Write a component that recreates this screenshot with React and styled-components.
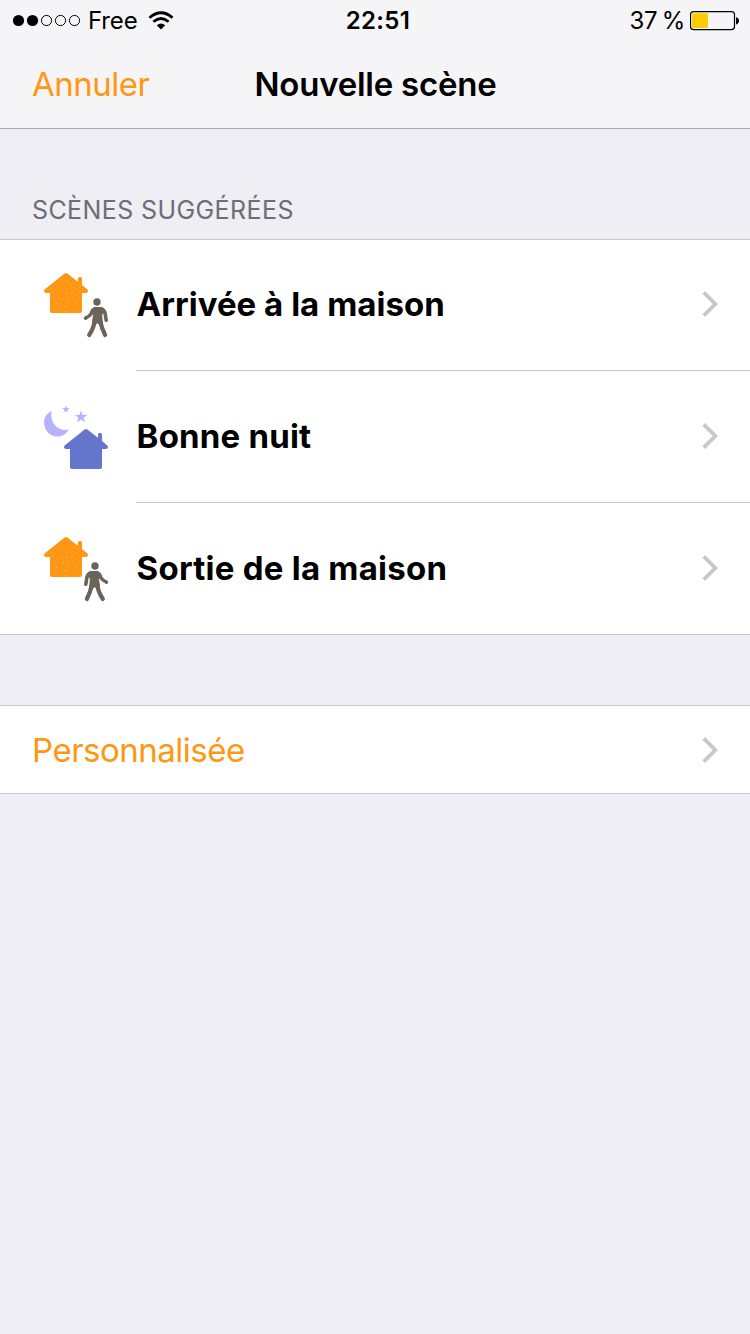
import React from "react";
import styled, { createGlobalStyle } from "styled-components";

const GlobalStyle = createGlobalStyle`
  * { box-sizing: border-box; }
  body {
    margin: 0;
    background: #efeef4;
    color: #000;
    font-family: Inter, "Liberation Sans", sans-serif;
  }
  svg { display: block; flex: none; }
`;

const Screen = styled.main`
  width: 750px;
  min-height: 1334px;
  background: #efeef4;
`;

const Header = styled.header`
  height: 129px;
  background: #f5f5f7;
  border-bottom: 1px solid #a9a9ad;
`;

const StatusBar = styled.div`
  height: 40px;
  display: grid;
  grid-template-columns: 1fr auto 1fr;
  align-items: center;
  padding: 0 11px 0 12px;
`;

const StatusGroup = styled.div`
  display: flex;
  align-items: center;
  justify-content: ${(p) => (p.$end ? "flex-end" : "flex-start")};
`;

const Label = styled.span`
  white-space: nowrap;
  font-size: ${(p) => p.$size}px;
  font-weight: ${(p) => p.$weight || 400};
  letter-spacing: ${(p) => p.$track || 0}px;
  color: ${(p) => p.$color || "#000"};
  line-height: 42px;
`;

const Carrier = styled(Label)`
  margin: 0 10px 0 7px;
`;

const Clock = styled(Label)`
  padding-left: 5px;
`;

const Percent = styled(Label)`
  margin-right: 5px;
  word-spacing: -2px;
`;

const NavBar = styled.nav`
  height: 88px;
  display: grid;
  grid-template-columns: 1fr auto 1fr;
  align-items: center;
  padding: 0 31px 0 32px;
`;

const SectionTitle = styled.h2`
  margin: 0;
  height: 110px;
  padding: 60px 32px 0;
  font-size: 25px;
  font-weight: 400;
  line-height: 42px;
  letter-spacing: 0.4px;
  color: #6d6d72;
`;

const List = styled.section`
  background: #fff;
  box-shadow: inset 0 1px #c8c7cc;
  margin-bottom: 70px;
`;

const SceneRow = styled.div`
  height: 132px;
  display: flex;
  align-items: center;
  padding-left: 30px;
  border-bottom: ${(p) => (p.$last ? "1px solid #c8c7cc" : "0")};
`;

const RowBody = styled.div`
  flex: 1;
  height: 132px;
  display: flex;
  align-items: center;
  justify-content: space-between;
  margin-left: 16px;
  padding: 0 31px 1px 0.6px;
  border-bottom: 1px solid ${(p) => (p.$line ? "#c8c7cc" : "transparent")};
`;

const CustomRow = styled.div`
  height: 89px;
  display: flex;
  align-items: center;
  justify-content: space-between;
  padding: 1px 31px 0 32px;
  border-bottom: 1px solid #c8c7cc;
`;

const Chevron = () => (
  <svg width="18" height="28" viewBox="0 0 18 28">
    <path d="M2.7 2.4 14.3 14 2.7 25.6" fill="none" stroke="#c7c7cc" strokeWidth="3.8" />
  </svg>
);

const SignalDots = () => (
  <svg width="69" height="14" viewBox="0 0 69 14">
    {[0, 1, 2, 3, 4].map((i) => (
      <circle
        key={i}
        cx={6.5 + i * 14}
        cy="6.5"
        r={i < 2 ? 5.6 : 5.1}
        fill={i < 2 ? "#000" : "none"}
        stroke={i < 2 ? "none" : "#000"}
      />
    ))}
  </svg>
);

const Wifi = () => (
  <svg width="26" height="20" viewBox="0 0 26 20">
    <g fill="none" stroke="#000" strokeWidth="2.8">
      <path d="M1.5 6.7Q13 -3.2 24.5 6.7" />
      <path d="M5.4 10.7Q13 4.2 20.6 10.7" />
    </g>
    <path d="M8.8 14.2Q13 10.8 17.2 14.2L13 18.4Z" />
  </svg>
);

const Battery = () => (
  <svg width="49" height="20" viewBox="0 0 49 20">
    <rect x=".5" y=".6" width="44" height="18" rx="3" fill="none" stroke="#000" strokeWidth="1.2" />
    <rect x="2" y="2.2" width="16" height="14.8" rx="1" fill="#ffcc00" />
    <path d="M46 6.2C50 6.6 50 13 46 13.4Z" />
  </svg>
);

const HOUSE_DOTS = [
  [32.5, 22.5], [36.5, 21.5], [27.5, 26.5], [41.5, 25.5], [36.5, 28.5],
  [45.5, 28.5], [23.5, 31.5], [31.5, 31.5], [41.5, 33.5], [49.5, 31.5],
  [27.5, 34.5], [35.5, 33.5], [23.5, 36.5], [29.5, 38.5], [33.5, 38.5],
  [38.5, 37.5], [42.5, 37.5], [48.5, 39.5], [26.5, 43.5], [37.5, 42.5],
  [46.5, 42.5], [24.5, 49.5], [30.5, 46.5], [34.5, 46.5], [42.5, 46.5],
  [36.5, 51.5],
];

const House = ({ x = 0, y = 0, color, dotted }) => (
  <g transform={`translate(${x} ${y})`}>
    <path
      fill={color}
      d="M34.6 13.5Q36 12.5 37.4 13.5L48 21.8V18.5Q48 17 49.5 17H50.5Q52 17 52 18.5V25L57.4 29.6Q58.6 31 57.6 32.3Q57 33 55.8 33H52V51Q52 53 50 53H22Q20 53 20 51V33H16.2Q15 33 14.4 32.3Q13.4 31 14.6 29.6Z"
    />
    {dotted &&
      HOUSE_DOTS.map(([dx, dy]) => (
        <rect key={`${dx}-${dy}`} x={dx - 0.5} y={dy - 0.5} width="1" height="1" fill="#ffb75c" />
      ))}
  </g>
);

const Walker = ({ leaving }) => (
  <g
    transform={leaving ? "translate(132 0) scale(-1 1)" : undefined}
    fill="none"
    stroke="#6c635b"
    strokeLinecap="round"
    strokeLinejoin="round"
  >
    <circle cx="67" cy="42" r="3.7" fill="#6c635b" stroke="none" />
    <path d="M64.6 47H70Q73 47 74.4 50L72.2 55L72.8 63L70 66L67.2 63L64.4 66L62 62L63 55L62 50Z" fill="#6c635b" stroke="none" />
    <path d="M65 48.8Q62.3 49.5 61.2 53.6Q59.5 56.4 55.6 58.2M71 48.8Q74.6 50 75.2 54L76.2 60.3" strokeWidth="3.6" />
    <path d="M64.6 61Q64 67.5 59.2 75M70.4 61Q71.4 68 75.1 75" strokeWidth="4.2" />
  </g>
);

const Moon = () => (
  <g fill="#b7b2ff">
    <path d="M21.8 19.2C17 21 14 25.2 14 30.6C14 38 19.5 44.6 27 44.6C32.4 44.6 36.5 42 38.8 37.2C35.3 38.7 29.6 37.8 25.8 34C22 30.2 20.4 24.5 21.8 19.2Z" />
    <path d="M36 13.2 36.9 16H39.8L37.5 17.7 38.4 20.5 36 18.8 33.6 20.5 34.5 17.7 32.2 16H35.1Z" />
    <path d="M51 18.2 52.5 22.9H57.4L53.5 25.8 55 30.5 51 27.6 47 30.5 48.5 25.8 44.6 22.9H49.5Z" />
  </g>
);

const SceneIcon = ({ kind }) => (
  <svg width="90" height="90" viewBox="0 0 90 90">
    {kind === "night" ? (
      <>
        <Moon />
        <House x={20} y={24} color="#6475cc" />
      </>
    ) : (
      <>
        <House color="#ff9614" dotted />
        <Walker leaving={kind === "leave"} />
      </>
    )}
  </svg>
);

const scenes = [
  { kind: "arrive", name: "Arrivée à la maison", track: 0.03 },
  { kind: "night", name: "Bonne nuit", track: 0.2 },
  { kind: "leave", name: "Sortie de la maison", track: 0.24 },
];

export default function App() {
  return (
    <Screen>
      <GlobalStyle />
      <Header>
        <StatusBar>
          <StatusGroup>
            <SignalDots />
            <Carrier $size={24} $track={-0.15}>Free</Carrier>
            <Wifi />
          </StatusGroup>
          <Clock $size={24} $weight={600} $track={0.3}>22:51</Clock>
          <StatusGroup $end>
            <Percent $size={24} $track={-0.3}>37 %</Percent>
            <Battery />
          </StatusGroup>
        </StatusBar>
        <NavBar>
          <Label $size={33} $track={-0.5} $color="#ff9614">Annuler</Label>
          <Label $size={33} $weight={600} $track={-0.24}>Nouvelle scène</Label>
        </NavBar>
      </Header>
      <SectionTitle>SCÈNES SUGGÉRÉES</SectionTitle>
      <List>
        {scenes.map((s, i) => (
          <SceneRow key={s.kind} $last={i === scenes.length - 1}>
            <SceneIcon kind={s.kind} />
            <RowBody $line={i < scenes.length - 1}>
              <Label $size={33} $weight={700} $track={s.track}>{s.name}</Label>
              <Chevron />
            </RowBody>
          </SceneRow>
        ))}
      </List>
      <List>
        <CustomRow>
          <Label $size={33} $track={-0.5} $color="#ff9614">Personnalisée</Label>
          <Chevron />
        </CustomRow>
      </List>
    </Screen>
  );
}
